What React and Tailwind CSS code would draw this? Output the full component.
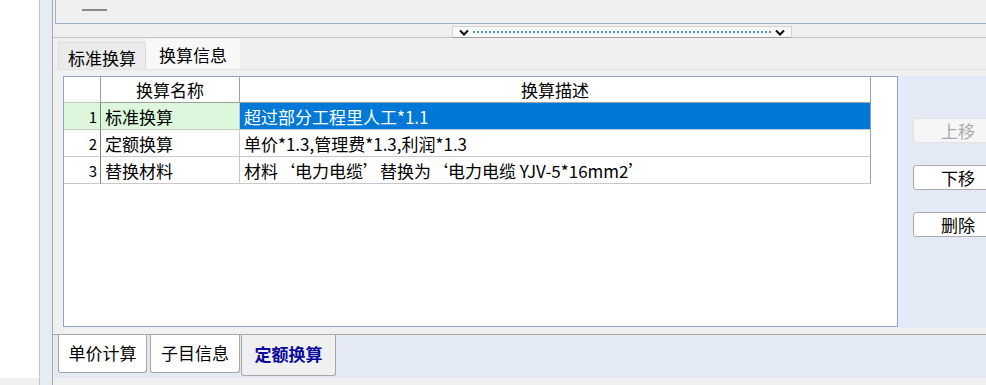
const rows = [
  { no: 1, name: '标准换算', desc: '超过部分工程里人工*1.1', selected: true },
  { no: 2, name: '定额换算', desc: '单价*1.3,管理费*1.3,利润*1.3' },
  { no: 3, name: '替换材料', desc: '材料‘电力电缆’替换为‘电力电缆 YJV-5*16mm2’' },
]

function Chevron() {
  return (
    <svg width="10" height="7" viewBox="0 0 10 7" className="shrink-0">
      <path d="M1 1.5 L5 5.5 L9 1.5" fill="none" stroke="#111" strokeWidth="2" />
    </svg>
  )
}

function SideButton({ label, disabled }) {
  return (
    <button
      className={
        disabled
          ? 'flex h-[25px] w-[90px] items-center justify-center rounded-[3px] border border-[#e2e2e2] bg-[#f6f6f6] text-[17px] leading-none text-[#a8a8a8]'
          : 'flex h-[25px] w-[90px] items-center justify-center rounded-[3px] border border-[#adadad] bg-white text-[17px] leading-none text-black'
      }
    >
      {label}
    </button>
  )
}

export default function App() {
  return (
    <div className="flex h-[385px] w-[986px] overflow-hidden bg-white font-['Noto_Sans_CJK_SC','Liberation_Sans',sans-serif] text-black">
      {/* left blank */}
      <div className="flex w-[39px] shrink-0 flex-col">
        <div className="flex-1 bg-white" />
        <div className="h-[7px] bg-[#f0f0f0]" />
      </div>
      <div className="w-[14px] shrink-0 border-l border-r border-l-[#c6c6c6] border-r-[#a9a9a9] bg-[#e6ecf4]" />

      {/* main */}
      <div className="flex min-w-0 flex-1 flex-col bg-[#f0f0f0]">
        {/* top panel */}
        <div className="ml-[2px] h-[24px] shrink-0 border-b border-l border-[#9db2cc] bg-[#f0f0f0] pl-[26px] pt-[9px]">
          <div className="h-[2px] w-[25px] bg-[#8a8a8a]" />
        </div>

        {/* splitter */}
        <div className="h-[14px] shrink-0 border-b border-[#c4c4c4] pl-[399px] pt-[2px]">
          <div className="flex h-[12px] w-[340px] items-center gap-[4px] border border-[#d4d4d4] border-b-[#a0a0a0] bg-[#f8f8f8] px-[6px]">
            <Chevron />
            <div className="h-0 flex-1 border-t-2 border-dotted border-[#4a8fd8]" />
            <Chevron />
          </div>
        </div>

        {/* top tabs */}
        <div className="flex h-[32px] shrink-0 items-end border-b border-[#e2e2e2] pl-[5px] text-[17px] leading-none">
          <div className="flex h-[27px] w-[88px] items-center justify-center border border-b-0 border-[#dcdcdc] bg-[#ebebeb] pt-[2px]">
            标准换算
          </div>
          <div className="flex h-[30px] w-[94px] items-center justify-center bg-[#f8f8f8] pt-[1px]">
            换算信息
          </div>
        </div>

        {/* content */}
        <div className="flex h-[258px] shrink-0">
          <div className="ml-[10px] mt-[6px] flex h-[251px] w-[835px] shrink-0 flex-col border border-[#8fa5bf] bg-white text-[17px] leading-none">
            {/* header */}
            <div className="flex h-[26px] shrink-0">
              <div className="w-[37px] border-b border-r border-b-[#c8c8c8] border-r-[#a0a0a0]" />
              <div className="flex w-[139px] items-center justify-center border-b border-r border-b-[#a0a0a0] border-r-[#a0a0a0]">
                换算名称
              </div>
              <div className="flex w-[631px] items-center justify-center border-b border-r border-b-[#a0a0a0] border-r-[#a0a0a0]">
                换算描述
              </div>
            </div>
            {rows.map((r) => (
              <div key={r.no} className="flex h-[27px] shrink-0">
                <div
                  className={
                    r.selected
                      ? 'flex w-[37px] items-center justify-end border-b border-r border-b-[#c8c8c8] border-r-[#808080] bg-[#dcf7dc] pr-[3px] text-[15px]'
                      : 'flex w-[37px] items-center justify-end border-b border-r border-b-[#c8c8c8] border-r-[#808080] bg-white pr-[3px] text-[15px]'
                  }
                >
                  {r.no}
                </div>
                <div
                  className={
                    r.selected
                      ? 'flex w-[139px] items-center border-b border-r border-[#c8c8c8] bg-[#dcf7dc] pl-[4px]'
                      : 'flex w-[139px] items-center border-b border-r border-[#c8c8c8] bg-white pl-[4px]'
                  }
                >
                  {r.name}
                </div>
                <div
                  className={
                    r.selected
                      ? 'flex w-[631px] items-center whitespace-nowrap border-b border-r border-b-[#c8c8c8] border-r-[#a0a0a0] bg-[#0078d7] pl-[4px] text-white'
                      : 'flex w-[631px] items-center whitespace-nowrap border-b border-r border-b-[#c8c8c8] border-r-[#a0a0a0] bg-white pl-[4px]'
                  }
                >
                  {r.desc}
                </div>
              </div>
            ))}
          </div>

          {/* side buttons */}
          <div className="mt-[6px] flex h-[252px] flex-1 flex-col gap-[22px] bg-[#e3eaf5] pl-[15px] pt-[42px]">
            <SideButton label="上移" disabled />
            <SideButton label="下移" />
            <SideButton label="删除" />
          </div>
        </div>

        <div className="h-[6px] shrink-0 bg-[#f0f0f0]" />

        {/* bottom tabs */}
        <div className="flex h-[44px] shrink-0 items-start border-t border-[#a9a9a9] bg-[#e3eaf4] pl-[5px] text-[17px] leading-none">
          <div className="flex h-[38px] w-[89px] items-center justify-center rounded-b-[3px] border border-t-0 border-[#a6a6a6] bg-white pb-[3px]">
            单价计算
          </div>
          <div className="ml-[3px] flex h-[38px] w-[90px] items-center justify-center rounded-b-[3px] border border-t-0 border-[#a6a6a6] bg-white pb-[3px]">
            子目信息
          </div>
          <div className="ml-[1px] flex h-[41px] w-[95px] items-center justify-center rounded-b-[3px] border border-t-0 border-[#a6a6a6] bg-[#f0f0f0] pb-[4px] font-bold text-[#0a0a9c]">
            定额换算
          </div>
        </div>

        <div className="flex-1 bg-[#f0f0f0]" />
      </div>
    </div>
  )
}
